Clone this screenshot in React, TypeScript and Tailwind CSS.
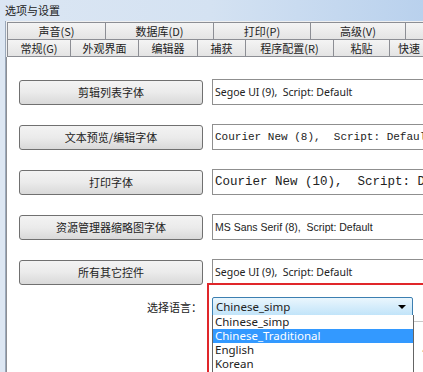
import React from 'react';

const cjk = '"Noto Sans CJK SC", sans-serif';

const row1 = [
  { label: '声音(S)', w: 'w-[98px]' },
  { label: '数据库(D)', w: 'w-[108px]' },
  { label: '打印(P)', w: 'w-[97px]' },
  { label: '高级(V)', w: 'w-[95px]' },
  { label: '', w: 'flex-1' },
];

const row2 = [
  { label: '常规(G)', w: 'w-[63px]' },
  { label: '外观界面', w: 'w-[68px]' },
  { label: '编辑器', w: 'w-[59px]' },
  { label: '捕获', w: 'w-[48px]' },
  { label: '程序配置(R)', w: 'w-[88px]' },
  { label: '粘贴', w: 'w-[56px]' },
  { label: '快速', w: 'flex-1' },
];

const fonts = [
  { btn: '剪辑列表字体', text: 'Segoe UI (9),  Script: Default', cls: 'font-["Noto_Sans"] text-[10.5px]' },
  { btn: '文本预览/编辑字体', text: 'Courier New (8),  Script: Default', cls: 'font-["Liberation_Mono"] text-[11px]' },
  { btn: '打印字体', text: 'Courier New (10),  Script: Default', cls: 'font-["Liberation_Mono"] text-[12.5px]' },
  { btn: '资源管理器缩略图字体', text: 'MS Sans Serif (8),  Script: Default', cls: 'font-["Liberation_Sans"] text-[10.5px]' },
  { btn: '所有其它控件', text: 'Segoe UI (9),  Script: Default', cls: 'font-["Noto_Sans"] text-[10.5px]' },
];

const langs = ['Chinese_simp', 'Chinese_Traditional', 'English', 'Korean'];

export default function App() {
  return (
    <div className="relative w-[423px] h-[372px] overflow-hidden bg-[#dce7f4] text-[#222]" style={{ fontFamily: cjk }}>
      {/* title bar */}
      <div className="h-[21px] bg-gradient-to-r from-[#dbe6f3] via-[#d4e2f2] to-[#b9d1ed] pl-[5px] text-[11px] leading-[20px]">选项与设置</div>

      <div className="flex h-[351px]">
        <div className="w-[6px] bg-[#dde7f3] border-r border-[#9aa8ba]" />
        <div className="flex-1 flex flex-col bg-[#f0f0f0] min-w-0">
          {/* tabs */}
          <div className="pt-[1px] pl-[1px]">
            <div className="flex h-[18px]">
              {row1.map((t, i) => (
                <div key={i} className={`${t.w} shrink-0 border border-r-0 border-[#8c8e94] bg-gradient-to-b from-[#f4f4f4] to-[#e4e4e4] text-center text-[11px] leading-[16px]`}>
                  {t.label}
                </div>
              ))}
            </div>
            <div className="flex h-[17px]">
              {row2.map((t, i) => (
                <div key={i} className={`${t.w} shrink-0 border border-t-0 border-r-0 border-[#8c8e94] bg-gradient-to-b from-[#f4f4f4] to-[#e4e4e4] text-[11px] leading-[16px] ${i === 6 ? 'pl-[8px] text-left' : 'text-center'}`}>
                  {t.label}
                </div>
              ))}
            </div>
          </div>

          {/* panel */}
          <div className="relative flex-1 bg-white border-l border-[#8c8e94] pt-[22px] pl-[12px]">
            <div className="flex flex-col gap-[19px]">
              {fonts.map((f, i) => (
                <div key={i} className="flex items-center gap-[9px] h-[26px]">
                  <div className="w-[184px] h-[25px] shrink-0 rounded-[3px] border border-[#707070] bg-gradient-to-b from-[#f3f3f3] via-[#ebebeb] to-[#d9d9d9] text-center text-[11px] leading-[23px]">
                    {f.btn}
                  </div>
                  <div className={`flex-1 h-[26px] border border-[#8f8f8f] border-r-0 bg-white pl-[2px] whitespace-pre overflow-hidden leading-[24px] ${f.cls}`}>
                    {f.text}
                  </div>
                </div>
              ))}
            </div>

            {/* language */}
            <div className="flex items-center mt-[12px] h-[20px]">
              <div className="w-[184px] pr-[1px] text-right text-[11px]">选择语言：</div>
              <div className="ml-[9px] w-[201px] h-[20px] rounded-[2px] border border-[#3c7fb1] bg-gradient-to-b from-[#eaf6fd] to-[#bfe3f9] flex items-center justify-between pl-[3px] pr-[6px] font-['Noto_Sans'] text-[11.5px] leading-[18px]">
                <span>Chinese_simp</span>
                <span className="w-0 h-0 border-l-[4px] border-r-[4px] border-t-[4px] border-l-transparent border-r-transparent border-t-black" />
              </div>
            </div>

            {/* control partly hidden behind list */}
            <div className="absolute left-[400px] top-[264px] w-[40px] h-[40px] border-t border-l border-[#c8c8c8] pl-[14px] pt-[16px] text-[11px]">从</div>

            {/* red highlight box */}
            <div className="absolute left-[200px] top-[226px] w-[240px] h-[100px] border-2 border-[#e0262a]" />

            {/* dropdown list */}
            <div className="absolute left-[205px] top-[258px] w-[202px] h-[60px] bg-white border border-[#646464] border-t-0 font-['Noto_Sans'] text-[11.5px]">
              {langs.map((l, i) => (
                <div key={l} className={`h-[14px] leading-[14px] pl-[2px] ${i === 1 ? 'bg-[#3399ff] text-white' : ''}`}>{l}</div>
              ))}
            </div>
          </div>
        </div>
      </div>
    </div>
  );
}
